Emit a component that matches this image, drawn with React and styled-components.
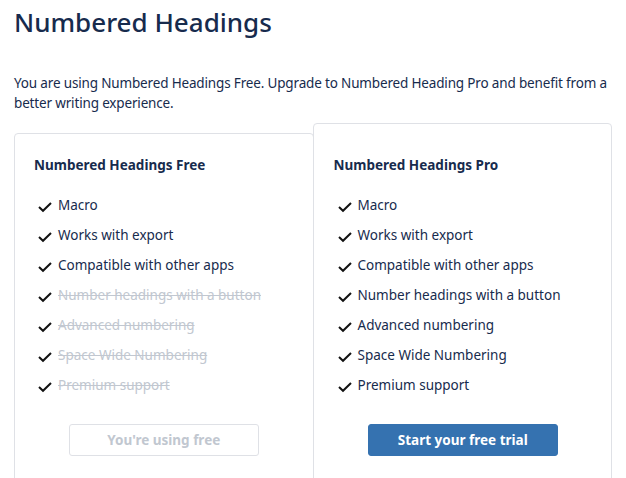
import React from "react";
import styled, { createGlobalStyle } from "styled-components";

const GlobalStyle = createGlobalStyle`
  body {
    margin: 0;
    background: #fff;
    font-family: "Noto Sans", "Open Sans", sans-serif;
    color: #172b4d;
  }
`;

const Page = styled.div`
  padding: 4px 14px 0 14px;
`;

const Title = styled.h1`
  margin: 0;
  font-size: 26px;
  font-weight: 500;
  line-height: 36px;
  color: #172b4d;
`;

const Intro = styled.p`
  margin: 33px 0 0 0;
  font-size: 13.5px;
  line-height: 20px;
  letter-spacing: -0.16px;
`;

const Plans = styled.div`
  display: flex;
  align-items: flex-start;
  margin-top: 10px;
`;

const Card = styled.div`
  width: 300px;
  box-sizing: border-box;
  background: #fff;
  border: 1px solid #dfe1e6;
  border-radius: 4px;
  padding: ${(p) => (p.$featured ? "29px 19px 40px 20px" : "19px 19px 40px")};
  margin-top: ${(p) => (p.$featured ? "0" : "10px")};
  margin-left: ${(p) => (p.$featured ? "-1px" : "0")};
  position: relative;
  z-index: ${(p) => (p.$featured ? 1 : 0)};
`;

const CardTitle = styled.h3`
  margin: 0;
  font-size: 13.5px;
  font-weight: 700;
  line-height: 24px;
`;

const Features = styled.ul`
  list-style: none;
  margin: 13px 0 0 0;
  padding: 0 0 0 4px;
`;

const Feature = styled.li`
  display: flex;
  align-items: center;
  gap: 6px;
  height: 30px;
  font-size: 13.5px;
  color: ${(p) => (p.$off ? "#c1c7d0" : "#172b4d")};
  text-decoration: ${(p) => (p.$off ? "line-through" : "none")};
`;

const Check = styled.svg`
  width: 14px;
  height: 14px;
  flex: none;
  margin-top: 3px;
`;

const ButtonRow = styled.div`
  display: flex;
  justify-content: center;
  margin-top: 24px;
`;

const Button = styled.button`
  width: 190px;
  height: 32px;
  border-radius: 3px;
  font-family: inherit;
  font-size: 13.5px;
  font-weight: 700;
  cursor: pointer;
  border: 1px solid ${(p) => (p.$primary ? "#3572b0" : "#dfe1e6")};
  background: ${(p) => (p.$primary ? "#3572b0" : "#fff")};
  color: ${(p) => (p.$primary ? "#fff" : "#c1c7d0")};
`;

const CheckIcon = () => (
  <Check viewBox="0 0 14 14">
    <path d="M1 7 L5 10.8 L13 3" fill="none" stroke="#111" strokeWidth="2" />
  </Check>
);

const features = [
  "Macro",
  "Works with export",
  "Compatible with other apps",
  "Number headings with a button",
  "Advanced numbering",
  "Space Wide Numbering",
  "Premium support",
];

const Plan = ({ name, freeCount, featured, button }) => (
  <Card $featured={featured}>
    <CardTitle>{name}</CardTitle>
    <Features>
      {features.map((f, i) => (
        <Feature key={f} $off={i >= freeCount}>
          <CheckIcon />
          {f}
        </Feature>
      ))}
    </Features>
    <ButtonRow>
      <Button $primary={featured}>{button}</Button>
    </ButtonRow>
  </Card>
);

export default function App() {
  return (
    <Page>
      <GlobalStyle />
      <Title>Numbered Headings</Title>
      <Intro>
        You are using Numbered Headings Free. Upgrade to Numbered Heading Pro and benefit from a better writing
        experience.
      </Intro>
      <Plans>
        <Plan name="Numbered Headings Free" freeCount={3} button="You're using free" />
        <Plan name="Numbered Headings Pro" freeCount={7} featured button="Start your free trial" />
      </Plans>
    </Page>
  );
}
